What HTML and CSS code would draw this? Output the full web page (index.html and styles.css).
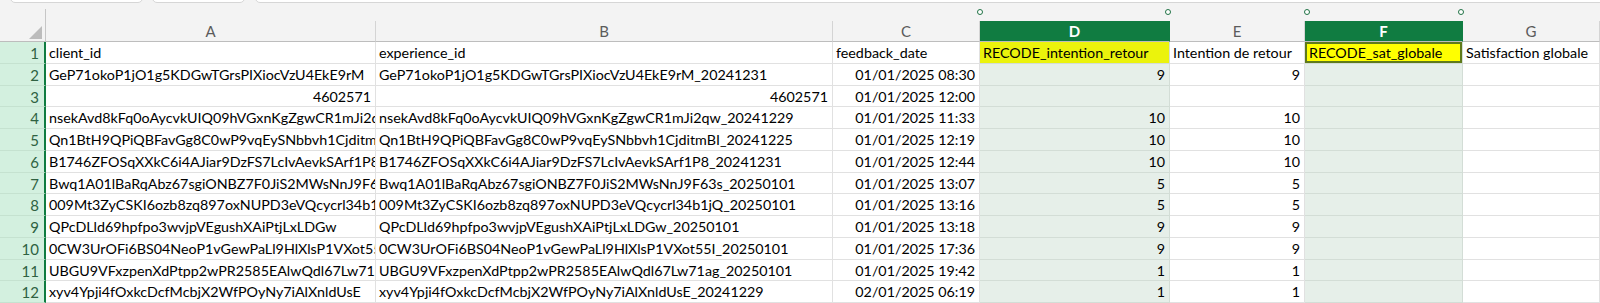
FILE: index.html
```html
<!DOCTYPE html>
<html lang="fr">
<head>
  <meta charset="UTF-8">
  <title>Feuille</title>
  <link rel="stylesheet" href="styles.css">
</head>
<body>
  <div class="toolbar">
    <div class="box box-name"></div>
    <div class="box box-fx"></div>
    <div class="box box-formula"></div>
  </div>
  <div class="sheet">
    <div class="corner"><span class="corner-tri"></span></div>
    <div class="strip"></div><div class="strip"></div><div class="strip"></div>
    <div class="strip"></div><div class="strip"></div><div class="strip"></div><div class="strip"></div>

    <div class="col-head">A</div>
    <div class="col-head">B</div>
    <div class="col-head">C</div>
    <div class="col-head sel">D</div>
    <div class="col-head">E</div>
    <div class="col-head sel">F</div>
    <div class="col-head">G</div>

    <div class="row-head">1</div>
    <div class="cell">client_id</div>
    <div class="cell">experience_id</div>
    <div class="cell">feedback_date</div>
    <div class="cell sel yellow">RECODE_intention_retour</div>
    <div class="cell">Intention de retour</div>
    <div class="cell sel yellow active">RECODE_sat_globale</div>
    <div class="cell overflow">Satisfaction globale</div>

    <div class="row-head">2</div>
    <div class="cell">GeP71okoP1jO1g5KDGwTGrsPIXiocVzU4EkE9rM</div>
    <div class="cell">GeP71okoP1jO1g5KDGwTGrsPIXiocVzU4EkE9rM_20241231</div>
    <div class="cell num">01/01/2025 08:30</div>
    <div class="cell sel num">9</div>
    <div class="cell num">9</div>
    <div class="cell sel"></div>
    <div class="cell"></div>

    <div class="row-head">3</div>
    <div class="cell num">4602571</div>
    <div class="cell num">4602571</div>
    <div class="cell num">01/01/2025 12:00</div>
    <div class="cell sel"></div>
    <div class="cell"></div>
    <div class="cell sel"></div>
    <div class="cell"></div>

    <div class="row-head">4</div>
    <div class="cell">nsekAvd8kFq0oAycvkUIQ09hVGxnKgZgwCR1mJi2qw</div>
    <div class="cell">nsekAvd8kFq0oAycvkUIQ09hVGxnKgZgwCR1mJi2qw_20241229</div>
    <div class="cell num">01/01/2025 11:33</div>
    <div class="cell sel num">10</div>
    <div class="cell num">10</div>
    <div class="cell sel"></div>
    <div class="cell"></div>

    <div class="row-head">5</div>
    <div class="cell">Qn1BtH9QPiQBFavGg8C0wP9vqEySNbbvh1CjditmBI</div>
    <div class="cell">Qn1BtH9QPiQBFavGg8C0wP9vqEySNbbvh1CjditmBI_20241225</div>
    <div class="cell num">01/01/2025 12:19</div>
    <div class="cell sel num">10</div>
    <div class="cell num">10</div>
    <div class="cell sel"></div>
    <div class="cell"></div>

    <div class="row-head">6</div>
    <div class="cell">B1746ZFOSqXXkC6i4AJiar9DzFS7LcIvAevkSArf1P8</div>
    <div class="cell">B1746ZFOSqXXkC6i4AJiar9DzFS7LcIvAevkSArf1P8_20241231</div>
    <div class="cell num">01/01/2025 12:44</div>
    <div class="cell sel num">10</div>
    <div class="cell num">10</div>
    <div class="cell sel"></div>
    <div class="cell"></div>

    <div class="row-head">7</div>
    <div class="cell">Bwq1A01lBaRqAbz67sgiONBZ7F0JiS2MWsNnJ9F63s</div>
    <div class="cell">Bwq1A01lBaRqAbz67sgiONBZ7F0JiS2MWsNnJ9F63s_20250101</div>
    <div class="cell num">01/01/2025 13:07</div>
    <div class="cell sel num">5</div>
    <div class="cell num">5</div>
    <div class="cell sel"></div>
    <div class="cell"></div>

    <div class="row-head">8</div>
    <div class="cell">009Mt3ZyCSKI6ozb8zq897oxNUPD3eVQcycrl34b1jQ</div>
    <div class="cell">009Mt3ZyCSKI6ozb8zq897oxNUPD3eVQcycrl34b1jQ_20250101</div>
    <div class="cell num">01/01/2025 13:16</div>
    <div class="cell sel num">5</div>
    <div class="cell num">5</div>
    <div class="cell sel"></div>
    <div class="cell"></div>

    <div class="row-head">9</div>
    <div class="cell">QPcDLld69hpfpo3wvjpVEgushXAiPtjLxLDGw</div>
    <div class="cell">QPcDLld69hpfpo3wvjpVEgushXAiPtjLxLDGw_20250101</div>
    <div class="cell num">01/01/2025 13:18</div>
    <div class="cell sel num">9</div>
    <div class="cell num">9</div>
    <div class="cell sel"></div>
    <div class="cell"></div>

    <div class="row-head">10</div>
    <div class="cell">0CW3UrOFi6BS04NeoP1vGewPaLl9HlXlsP1VXot55I</div>
    <div class="cell">0CW3UrOFi6BS04NeoP1vGewPaLl9HlXlsP1VXot55I_20250101</div>
    <div class="cell num">01/01/2025 17:36</div>
    <div class="cell sel num">9</div>
    <div class="cell num">9</div>
    <div class="cell sel"></div>
    <div class="cell"></div>

    <div class="row-head">11</div>
    <div class="cell">UBGU9VFxzpenXdPtpp2wPR2585EAlwQdl67Lw71ag</div>
    <div class="cell">UBGU9VFxzpenXdPtpp2wPR2585EAlwQdl67Lw71ag_20250101</div>
    <div class="cell num">01/01/2025 19:42</div>
    <div class="cell sel num">1</div>
    <div class="cell num">1</div>
    <div class="cell sel"></div>
    <div class="cell"></div>

    <div class="row-head">12</div>
    <div class="cell">xyv4Ypji4fOxkcDcfMcbjX2WfPOyNy7iAlXnldUsE</div>
    <div class="cell">xyv4Ypji4fOxkcDcfMcbjX2WfPOyNy7iAlXnldUsE_20241229</div>
    <div class="cell num">02/01/2025 06:19</div>
    <div class="cell sel num">1</div>
    <div class="cell num">1</div>
    <div class="cell sel"></div>
    <div class="cell"></div>

    <!-- poignées de sélection -->
    <span class="handle" style="left: 977px"></span>
    <span class="handle" style="left: 1165px"></span>
    <span class="handle" style="left: 1304px"></span>
    <span class="handle" style="left: 1458px"></span>
  </div>
</body>
</html>
```

FILE: styles.css
```css
body {
  margin: 0;
  background: #f3f3f3;
  font-family: Lato, 'Liberation Sans', sans-serif;
  font-size: 14.3px;
  color: #000;
  overflow: hidden;
}
.toolbar {
  display: flex;
  height: 4px;
  overflow: hidden;
}
.box {
  height: 14px;
  margin-top: -11px;
  background: #fff;
  border: 1px solid #d6d6d6;
  border-radius: 5px;
  box-sizing: border-box;
}
.box-name { margin-left: 10px; width: 133px; }
.box-fx { margin-left: 9px; width: 93px; }
.box-formula { margin-left: 10px; flex: 1; margin-right: -10px; }

.sheet {
  position: relative;
  display: grid;
  grid-template-columns: 46px 330px 457px 147px 190px 135px 158px 137px;
  grid-template-rows: 17px 21px repeat(12, 21.75px);
}
.corner {
  grid-row: 1 / 3;
  margin-top: 5px;
  border-right: 1px solid #c6c6c6;
  border-bottom: 1px solid #bdbdbd;
  position: relative;
}
.corner-tri {
  position: absolute;
  right: 3px;
  bottom: 2px;
  width: 0;
  height: 0;
  border-left: 13px solid transparent;
  border-bottom: 13px solid #bcbcbc;
}
.col-head {
  display: flex;
  align-items: center;
  justify-content: center;
  color: #5b5b5b;
  border-right: 1px solid #d4d4d4;
  border-bottom: 1px solid #bdbdbd;
  font-size: 15px;
}
.col-head.sel {
  background: #107c41;
  color: #fff;
  font-weight: bold;
  border-right-color: #107c41;
}
.row-head {
  background: #d3f0df;
  color: #2f6242;
  text-align: right;
  padding-right: 5px;
  line-height: 22px;
  border-right: 2px solid #107c41;
  border-bottom: 1px solid #c5e2d0;
  font-size: 15px;
}
.cell {
  background: #fff;
  border-right: 1px solid #e1e1e1;
  border-bottom: 1px solid #e1e1e1;
  padding: 0 3px;
  line-height: 22px;
  white-space: nowrap;
  overflow: hidden;
}
.cell.num {
  text-align: right;
  padding-right: 4px;
}
.cell.sel {
  background: #e6efe9;
  border-right-color: #d3ddd6;
  border-bottom-color: #d3ddd6;
}
.cell.yellow {
  background: #ebf30c;
}
.cell.active {
  background: #ffff00;
  box-shadow: inset 0 0 0 2px #5f7a1b;
  padding-left: 4px;
}
.cell.overflow {
  overflow: visible;
}
.handle {
  position: absolute;
  top: 5px;
  width: 4px;
  height: 4px;
  border: 1.5px solid #217346;
  border-radius: 50%;
  background: #fff;
}
```
